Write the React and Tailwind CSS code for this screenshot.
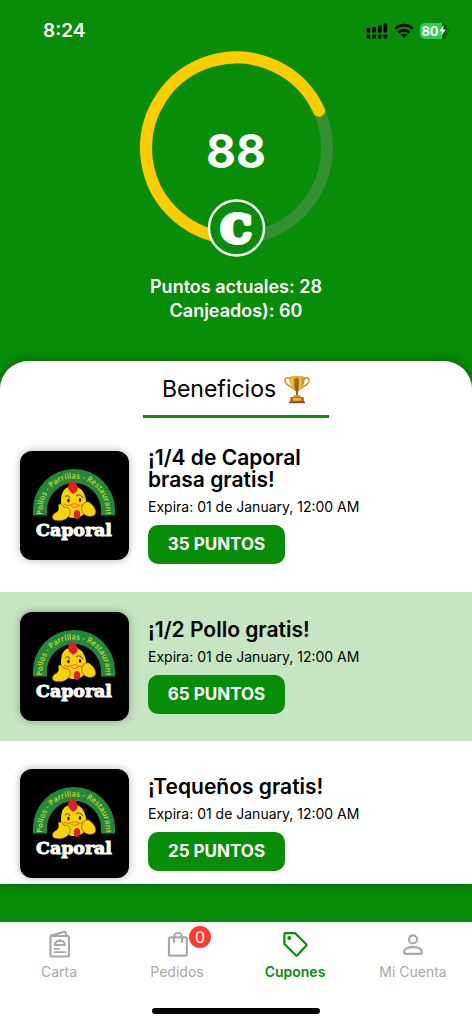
const benefits = [
  { id: 1, title: '¡1/4 de Caporal brasa gratis!', expires: '01 de January, 12:00 AM', points: 35 },
  { id: 2, title: '¡1/2 Pollo gratis!', expires: '01 de January, 12:00 AM', points: 65 },
  { id: 3, title: '¡Tequeños gratis!', expires: '01 de January, 12:00 AM', points: 25 },
];

const MenuIcon = () => (
  <svg width="28" height="28" viewBox="0 0 28 28" fill="none" stroke="currentColor" strokeWidth="2.2" strokeLinejoin="round" strokeLinecap="round">
    <rect x="5.5" y="6" width="18.5" height="20.5" rx="1.2" />
    <path d="M6 5.6 L19.5 1.8 Q20.8 1.6 20.8 3 V6" />
    <path d="M10 15 a4.9 4.4 0 0 1 9.8 0 Z M14.9 10 v1" />
    <path d="M9.5 18.8 h4.5 M9.5 22.2 h11" strokeWidth="1.8" />
  </svg>
);

const BagIcon = () => (
  <svg width="28" height="28" viewBox="0 0 28 28" fill="none" stroke="currentColor" strokeWidth="2.2" strokeLinejoin="round" strokeLinecap="round">
    <rect x="6" y="7.3" width="17.8" height="18.4" rx="1" />
    <path d="M11 12 V7 a4 4 0 0 1 8 0 V12" />
  </svg>
);

const TagIcon = () => (
  <svg width="28" height="28" viewBox="0 0 28 28" fill="none" stroke="currentColor" strokeWidth="2.2" strokeLinejoin="round">
    <path d="M3.4 4.3 Q3.4 3.2 4.5 3.2 H13.6 Q14.2 3.2 14.7 3.7 L25.2 14.2 Q26 15 25.2 15.8 L16.4 25.2 Q15.6 26 14.8 25.2 L3.9 14.5 Q3.4 14 3.4 13.4 Z" />
    <circle cx="8.2" cy="7.9" r="2" fill="currentColor" stroke="none" />
  </svg>
);

const PersonIcon = () => (
  <svg width="28" height="28" viewBox="0 0 28 28" fill="none" stroke="currentColor" strokeWidth="2.2" strokeLinejoin="round">
    <circle cx="14" cy="9.4" r="4" />
    <path d="M5.2 22 C5.2 15.4 22.8 15.4 22.8 22 Q22.8 23.8 21 23.8 H7 Q5.2 23.8 5.2 22 Z" />
  </svg>
);

const TrophyIcon = () => (
  <svg role="img" aria-label="Trofeo" width="26" height="29" viewBox="0 0 26 29">
    <defs>
      <linearGradient id="gold" x1="0" x2="1">
        <stop offset="0" stopColor="#d99a1d" />
        <stop offset="0.2" stopColor="#f3cc4c" />
        <stop offset="0.42" stopColor="#a5690a" />
        <stop offset="0.55" stopColor="#8a5506" />
        <stop offset="0.68" stopColor="#f3c846" />
        <stop offset="1" stopColor="#b97810" />
      </linearGradient>
    </defs>
    <path d="M6 4 C3 1.5 0 3 1.3 7 C2.8 10.8 6.5 10.5 9.5 14 M20 4 C23 1.5 26 3 24.7 7 C23.2 10.8 19.5 10.5 16.5 14" fill="none" stroke="#c98f1a" strokeWidth="1.5" />
    <path d="M5.2 2 H20.8 C20.8 9.5 18 14 14.2 16 L13.8 20.5 H12.2 L11.8 16 C8 14 5.2 9.5 5.2 2 Z" fill="url(#gold)" />
    <ellipse cx="13" cy="2.2" rx="7.8" ry="1.2" fill="#dcae3e" />
    <path d="M10.5 20 H15.5 L17.5 22.5 H8.5 Z" fill="#d99a1d" />
    <path d="M6.5 22 H19.5 L20 27 H6 Z" fill="#b0622a" />
    <rect x="9" y="23" width="8" height="2.8" fill="#e6b448" />
    <rect x="5" y="26.5" width="16" height="1.8" rx="0.6" fill="#98471a" />
  </svg>
);

const CaporalLogo = ({ id }) => (
  <svg role="img" aria-label="Caporal" viewBox="0 0 109 109" className="size-[109px] shrink-0 rounded-xl bg-black shadow-[0_0_8px_rgba(0,0,0,0.3)]">
    <path d="M13 64.5 V59 A41 41 0 0 1 95 59 V64.5 H81 V59 A27 27 0 0 0 27 59 V64.5 Z" fill="#23883a" />
    <path id={`arc-${id}`} d="M22.5 64.5 V59 A31.5 31.5 0 0 1 85.5 59 V64.5" fill="none" />
    <text fontFamily="Open Sans, sans-serif" fontSize="7.8" fontWeight="600" fill="#c9d92b">
      <textPath href={`#arc-${id}`} startOffset="50%" textAnchor="middle">Pollos - Parrillas - Restaurant</textPath>
    </text>
    <path d="M41 50 C41 40 45 35.5 53 35.5 C61 35.5 64.5 41 66 49 C68 58 65 67 54 67 C43 67 41 58 41 50 Z" fill="#fad20a" />
    <path d="M38 53.5 C41.5 52 43 54 44 56.5 C48 55.5 51 58 50 62.5 C49 67.5 42 71 37 69.5 C31.5 70 31 64 35 62 C39 60 39 58 38 53.5 Z" fill="#fad20a" stroke="#5a4300" strokeWidth="0.6" />
    <path d="M69 51 C75 55 78 62 74 64.5 C68 67.5 62 63 61.5 58 C62 53.5 65 50 69 51 Z" fill="#fad20a" stroke="#5a4300" strokeWidth="0.6" />
    <path d="M52 30 C56 30.5 58 35 57.5 38 C57 41 54 42 53 43 C51 41 48 39 48 36 C48 33 50 30.5 52 30 Z" fill="#e01f26" />
    <path d="M45 46 q3 -3 5 1 M56 45 q4 -3 7 2" fill="none" stroke="#2b2100" strokeWidth="0.8" />
    <ellipse cx="48.5" cy="49.5" rx="1.2" ry="2" fill="#2b2100" />
    <ellipse cx="60" cy="49" rx="1.2" ry="2" fill="#2b2100" />
    <path d="M44 53 Q48 56 52 53.5 L55 52.5 L58 54 Q61 55.5 64 53 M51 55 Q55 58 59 54.5" fill="none" stroke="#e8661c" strokeWidth="1" />
    <ellipse cx="57" cy="63.5" rx="3.2" ry="4.6" fill="#e01f26" />
    <text x="54" y="85" textAnchor="middle" fontFamily="DejaVu Serif, serif" fontSize="17.4" fontWeight="700" fill="#fff" stroke="#fff" strokeWidth="1" strokeLinejoin="round">
      Caporal
    </text>
  </svg>
);

const StatusBar = () => (
  <div className="flex h-[51px] items-center justify-between pl-[43px] pr-[23px] pt-[10px]">
    <span className="text-[19px] font-semibold leading-6 text-white">8:24</span>
    <div className="flex items-center gap-[6px]">
      <svg width="22" height="16" viewBox="0 0 22 16" aria-hidden="true">
        <rect x="0.5" y="5" width="3.6" height="4.5" rx="1.2" />
        <rect x="6.2" y="4" width="3.6" height="5.5" rx="1.2" />
        <rect x="11.9" y="2.5" width="3.6" height="7" rx="1.2" />
        <rect x="17.6" y="0.5" width="3.6" height="9" rx="1.2" />
        <rect x="0.5" y="11.5" width="3.6" height="4" rx="1.2" />
        <rect x="6.2" y="11.5" width="3.6" height="4" rx="1.2" />
        <rect x="11.9" y="11.5" width="3.6" height="4" rx="1.2" />
        <rect x="17.6" y="11.5" width="3.6" height="4" rx="1.2" />
      </svg>
      <svg width="20" height="16" viewBox="0 0 20 16" fill="none" stroke="#000" strokeWidth="2.8" aria-hidden="true">
        <path d="M1.2 5.8 A12.6 12.6 0 0 1 18.8 5.8" />
        <path d="M4.4 9.4 A8 8 0 0 1 15.6 9.4" />
        <path d="M10 14.8 L6.9 11.8 A4.4 4.4 0 0 1 13.1 11.8 Z" fill="#000" stroke="none" />
      </svg>
      <div className="flex items-center gap-px">
        <div className="flex h-4 w-[27px] items-center justify-center rounded-[5px] bg-linear-to-r from-[#34c759] from-80% to-[#06630a] to-80%">
          <span className="text-[13px] font-bold leading-4 text-white">80</span>
          <svg width="7" height="11" viewBox="0 0 7 11" fill="#fff" aria-hidden="true">
            <path d="M4.8 0 L0.3 6.2 H3 L2.2 11 L6.8 4.6 H4 Z" />
          </svg>
        </div>
        <span className="h-1 w-px rounded-r bg-[#06630a]" />
      </div>
    </div>
  </div>
);

const PointsRing = ({ total }) => (
  <div className="relative mx-auto w-[194px]">
    <svg viewBox="0 0 194 206" className="block w-full" aria-hidden="true">
      <circle cx="97.5" cy="97" r="90.5" fill="none" stroke="#339033" strokeWidth="12" />
      <path d="M97.5 187.5 A90.5 90.5 0 1 1 180 59.7" fill="none" stroke="#ffcc00" strokeWidth="12" strokeLinecap="round" />
      <circle cx="97.5" cy="177" r="27.5" fill="#088d08" stroke="#fff" strokeWidth="2.4" />
      <text x="97" y="191" textAnchor="middle" fontFamily="DejaVu Serif, serif" fontSize="38" fontWeight="700" fill="#fff" stroke="#fff" strokeWidth="5" strokeLinejoin="round">
        C
      </text>
    </svg>
    <div className="absolute inset-x-0 top-[72px] text-center text-[46px] font-bold leading-[56px] text-white">{total}</div>
  </div>
);

const tabs = [
  { label: 'Carta', icon: MenuIcon },
  { label: 'Pedidos', icon: BagIcon, badge: 0 },
  { label: 'Cupones', icon: TagIcon, active: true },
  { label: 'Mi Cuenta', icon: PersonIcon },
];

const App = () => {
  return (
    <div className="flex min-h-screen flex-col bg-[#088d08] font-['Inter',sans-serif] text-black">
      <header>
        <StatusBar />
        <PointsRing total={88} />
        <div className="mt-[18px] text-center text-lg font-semibold leading-6 text-white">
          <p>Puntos actuales: 28</p>
          <p>Canjeados): 60</p>
        </div>
      </header>

      <main className="mb-[38px] mt-[38px] rounded-t-[28px] bg-white shadow-[0_0_10px_rgba(0,0,0,0.4)]">
        <h1 className="mx-auto flex w-[186px] items-center justify-center gap-2 border-b-[3px] border-[#088d08] pb-2.5 pt-3 text-[23px] font-normal leading-8">
          Beneficios <TrophyIcon />
        </h1>
        <ul className="flex flex-col gap-2 pt-[9px]">
          {benefits.map((b) => (
            <li key={b.id} className="flex items-center gap-[19px] px-5 py-5 last:pb-1.5 even:bg-[#c5e6c0]">
              <CaporalLogo id={b.id} />
              <div>
                <h2 className="max-w-[180px] text-[21px] font-semibold leading-[22px]">{b.title}</h2>
                <p className="mt-1 text-sm leading-6">Expira: {b.expires}</p>
                <button type="button" className="mt-1.5 h-[39px] w-[137px] rounded-[10px] bg-[#088d08] text-[17px] font-bold text-white">
                  {b.points} PUNTOS
                </button>
              </div>
            </li>
          ))}
        </ul>
      </main>

      <nav className="mt-auto bg-white pb-2.5 pt-2">
        <div className="grid grid-cols-4">
          {tabs.map(({ label, icon: Icon, badge, active }) => (
            <a key={label} href="#" className={`flex flex-col items-center gap-0.5 text-sm leading-6 ${active ? 'font-semibold text-[#088d08]' : 'text-[#a8a8a8]'}`}>
              <span className="relative">
                <Icon />
                {badge !== undefined && (
                  <span className="absolute -right-5 -top-1 flex size-[22px] items-center justify-center rounded-full bg-[#ff3b30] text-base text-white">{badge}</span>
                )}
              </span>
              {label}
            </a>
          ))}
        </div>
        <div className="mx-auto mt-6 h-1.5 w-[168px] rounded-full bg-black" />
      </nav>
    </div>
  );
};

export default App;
